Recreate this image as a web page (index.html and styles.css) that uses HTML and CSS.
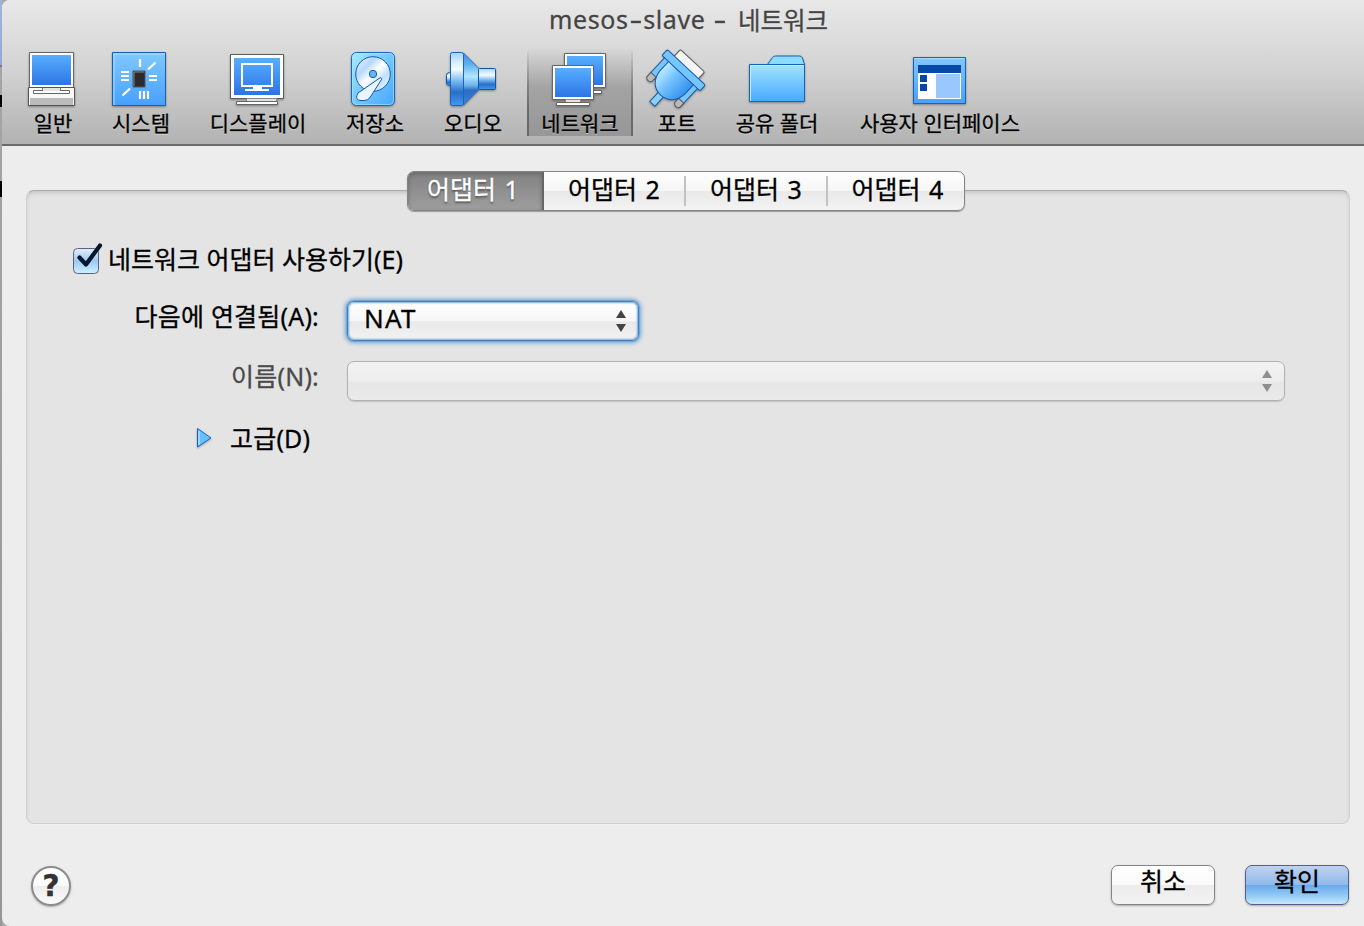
FILE: index.html
```html
<!DOCTYPE html>
<html lang="ko">
<head>
<meta charset="utf-8">
<title>mesos-slave - 네트워크</title>
<link rel="stylesheet" href="styles.css">
</head>
<body>
<svg class="defs" width="0" height="0">
  <defs>
    <linearGradient id="screen" x1="0" y1="0" x2="0" y2="1"><stop offset="0" stop-color="#57afff"/><stop offset="1" stop-color="#2d74e4"/></linearGradient>
    <linearGradient id="sky" x1="0" y1="0" x2="0" y2="1"><stop offset="0" stop-color="#80c9ff"/><stop offset="1" stop-color="#46a0ff"/></linearGradient>
    <linearGradient id="disk" x1="0" y1="0" x2="1" y2="1"><stop offset="0" stop-color="#a9eaff"/><stop offset=".5" stop-color="#71c8ff"/><stop offset="1" stop-color="#46a5fb"/></linearGradient>
    <linearGradient id="platter" x1="0" y1="0" x2="1" y2="1"><stop offset="0" stop-color="#f2f7ff"/><stop offset=".3" stop-color="#b6d8ff"/><stop offset=".5" stop-color="#fff"/><stop offset=".7" stop-color="#c1e1ff"/><stop offset="1" stop-color="#f6fbff"/></linearGradient>
    <linearGradient id="horn" x1="0" y1="0" x2="0" y2="1"><stop offset="0" stop-color="#a3d2f7"/><stop offset=".2" stop-color="#d9f1ff"/><stop offset=".32" stop-color="#f4fbff"/><stop offset=".55" stop-color="#74b5f0"/><stop offset=".75" stop-color="#286fc8"/><stop offset="1" stop-color="#4397f1"/></linearGradient>
    <linearGradient id="cone" x1="0" y1="0" x2="0" y2="1"><stop offset="0" stop-color="#3c8fe0"/><stop offset=".22" stop-color="#62b1ee"/><stop offset=".45" stop-color="#b2e5ff"/><stop offset=".62" stop-color="#6eb5ec"/><stop offset=".72" stop-color="#2b6cc4"/><stop offset="1" stop-color="#3a82dc"/></linearGradient>
    <linearGradient id="plug" x1="0" y1="0" x2="1" y2="0"><stop offset="0" stop-color="#bfeaff"/><stop offset=".4" stop-color="#77c5ff"/><stop offset="1" stop-color="#3591ee"/></linearGradient>
    <linearGradient id="folder" x1="0" y1="0" x2="0" y2="1"><stop offset="0" stop-color="#a0e5ff"/><stop offset="1" stop-color="#48a8ff"/></linearGradient>
  </defs>
</svg>
<div class="backdrop"><i class="mark mark-a"></i><i class="mark mark-b"></i></div>
<main class="window">
  <header class="toolbar">
    <h1 class="title"><span class="latin">mesos<span class="dash">-</span>slave <span class="dash">-</span></span><span class="hangul">네트워크</span></h1>
    <nav class="tools">
      <div class="tool"><svg class="icon" viewBox="21 48 64 62">
        <path d="M29.500 52.500h44v35h-44z" fill="#fff" stroke="#666"/><path d="M32 55h39v30H32z" fill="url(#screen)"/>
        <path d="M28.500 87.500h46v18h-46z" fill="#f8f8f8" stroke="#555"/><path d="M30 98h43v7H30z" fill="#bbb"/>
        <path d="M33.500 90.500h36v3h-36z" fill="#fff" stroke="#666"/><path d="M43 88h17v3H43z" fill="#e2e4e2"/><path d="M42.500 87.500v3M60.500 87.500v3" stroke="#777"/></svg><span>일반</span></div>
      <div class="tool"><svg class="icon" viewBox="109 48 64 62">
        <path d="M112.500 52.500h53v53h-53z" fill="url(#sky)" stroke="#155fb8"/><path d="M114 105V54h51" fill="none" stroke="#b3ddff"/>
        <path d="M133 71h12v16h-12z" fill="#292b2d" stroke="#57544e"/><path d="M134 86V72h10" fill="none" stroke="#8a8780"/>
        <path d="M140 59v8M148 69.500l7.500-7M121 72h8M121 76h8M121 80h8M149 76h8M149 80h8M122.500 95.500l7.500-7M140 91v8M144 91v8M148 91v8" fill="none" stroke="#fff" stroke-width="2.200"/></svg><span>시스템</span></div>
      <div class="tool"><svg class="icon" viewBox="226 48 64 62">
        <path d="M230.500 54.500h53v44h-53z" fill="#fff" stroke="#5c5c5c"/><path d="M234 58h46v37h-46z" fill="url(#screen)"/>
        <path d="M242 64h30v22h-30z" fill="none" stroke="#fff" stroke-width="2"/><path d="M253 87h9v2h7v2h-24v-2h8z" fill="#fff"/>
        <path d="M246.500 98.500h30v3h-30z" fill="#e4e4e4" stroke="#888"/><path d="M236.500 101.500h41v3h-41z" fill="#fff" stroke="#666"/></svg><span>디스플레이</span></div>
      <div class="tool"><svg class="icon" viewBox="343 48 64 62">
        <rect x="351.500" y="52.500" width="43" height="53" rx="5" fill="url(#disk)" stroke="#1768bd"/><rect x="352.500" y="53.500" width="41" height="51" rx="4" fill="none" stroke="#a8eaff" opacity=".6"/>
        <circle cx="373" cy="74" r="17.300" fill="url(#platter)" stroke="#1658ab"/><circle cx="373" cy="74" r="3.700" fill="#69b5f2" stroke="#1658ab"/>
        <path d="M379 78.500q3-2 2.500 1L370 97.500q-2 3-6 3h-4q-4.500-1-3-5 0-3 4-4.500z" fill="#eaf6ff" stroke="#1658ab"/></svg><span>저장소</span></div>
      <div class="tool"><svg class="icon" viewBox="441 48 64 62">
        <rect x="446.500" y="72.500" width="6" height="13" rx="3" fill="url(#horn)" stroke="#1254a7"/>
        <path d="M463.500 53l15.500 15.500v21L463.500 105z" fill="url(#cone)" stroke="#2a70c2"/>
        <rect x="450.500" y="52.500" width="13" height="53" rx="2" fill="url(#horn)" stroke="#1a62ba"/>
        <rect x="478.500" y="68.500" width="17" height="21" rx="1" fill="url(#horn)" stroke="#1254a7"/></svg><span>오디오</span></div>
      <div class="tool selected"><svg class="icon" viewBox="548 48 64 62">
        <path d="M593.500 90.500h8v3h-8z" fill="#fff" stroke="#666"/><path d="M564.500 53.500h41v34h-41z" fill="#fff" stroke="#666"/><path d="M567 56h36v29h-36z" fill="url(#screen)"/>
        <path d="M552.500 65.500h41v34h-41z" fill="#fff" stroke="#666"/><path d="M555 68h36v29h-36z" fill="url(#screen)"/>
        <path d="M565.500 99.500h15v3h-15z" fill="#e1e4e1" stroke="#888"/><path d="M556.500 102.500h33v3h-33z" fill="#fff" stroke="#666"/></svg><span>네트워크</span></div>
      <div class="tool"><svg class="icon" viewBox="645 48 64 62">
        <g transform="translate(683 71) rotate(43)" stroke="#1459ad">
          <rect x="-16.500" y="-14" width="33" height="12" rx="1.500" fill="#f5f5f5" stroke="#555"/>
          <path d="M-22.500 1h7v24h-7zM15.500 1h7v24h-7z" fill="#79c5fb"/>
          <path d="M-22.500 23h7v6q-3.500 4-7 0zM15.500 23h7v6q-3.500 4-7 0z" fill="#bbb" stroke="#555"/>
          <path d="M-3.500 30h7v15h-7z" fill="#8bd0fc"/>
          <path d="M-17 2h34v14q-2 16-17 17-15-1-17-17z" fill="url(#plug)"/>
          <rect x="-26" y="-5" width="52" height="8" rx="1.500" fill="#75c6ff"/>
        </g></svg><span>포트</span></div>
      <div class="tool"><svg class="icon" viewBox="745 48 64 62">
        <path d="M767.500 64.500l5-7q1-1.500 3-1.500h24q2 0 3 2l2 6.500z" fill="#8bdcff" stroke="#1763bb"/>
        <path d="M749.500 64.500h55v37h-55z" fill="url(#folder)" stroke="#1763bb"/><path d="M750.500 101V65.500h53" fill="none" stroke="#c1eeff"/></svg><span>공유 폴더</span></div>
      <div class="tool"><svg class="icon" viewBox="908 48 64 62">
        <path d="M913.500 57.500h52v46h-52z" fill="url(#sky)" stroke="#1462bb"/><path d="M914.500 58.500h50" stroke="#a9ddff"/>
        <path d="M918 73h43v26h-43z" fill="#fff"/><path d="M918 65h43v8h-43zM920 75h7v7h-7zM920 84h7v7h-7z" fill="#0648a8"/><path d="M936 74h24v24h-24z" fill="#9bc7ff"/></svg><span>사용자 인터페이스</span></div>
    </nav>
  </header>
  <section class="content">
    <div class="panel">
      <div class="tabs">
        <button class="tab active">어댑터 1</button><button class="tab second">어댑터 2</button><button class="tab third">어댑터 3</button><button class="tab fourth">어댑터 4</button>
      </div>
      <div class="enable">
        <svg class="check" viewBox="0 0 32 34"><defs><linearGradient id="box" x1="0" y1="0" x2="0" y2="1"><stop offset="0" stop-color="#e8eef8"/><stop offset=".5" stop-color="#9dc8f2"/><stop offset="1" stop-color="#cdf2ff"/></linearGradient></defs>
          <rect x="1.500" y="6.500" width="25" height="25" rx="4" fill="url(#box)" stroke="#5b6280"/><path d="M7.500 15.500l6.500 7L28 3.500" fill="none" stroke="#06182e" stroke-width="4.200" stroke-linecap="round" stroke-linejoin="round"/></svg>
        <span class="enable-text">네트워크 어댑터 사용하기(E)</span>
      </div>
      <div class="form">
        <label class="attach">다음에 연결됨(A):</label>
        <div class="select focus"><span>NAT</span><svg class="arrows" viewBox="0 0 12 24"><path d="M6 1l5 8H1zM6 23l5-8H1z"/></svg></div>
        <label class="name">이름(N):</label>
        <div class="select disabled"><span></span><svg class="arrows" viewBox="0 0 12 24"><path d="M6 1l5 8H1zM6 23l5-8H1z"/></svg></div>
      </div>
      <div class="advanced">
        <svg class="disclosure" viewBox="0 0 17 22"><path d="M1.500 1.500L15 11 1.500 20z" fill="#69c0ff" stroke="#1765bb" stroke-linejoin="round"/><path d="M3 4v14" stroke="#c5ebff"/></svg>
        <span class="adv-text">고급(D)</span>
      </div>
    </div>
  </section>
  <footer class="footer">
    <button class="help">?</button>
    <button class="btn cancel">취소</button>
    <button class="btn ok">확인</button>
  </footer>
</main>
</body>
</html>
```
FILE: styles.css
```css
* { box-sizing: border-box; }
html, body { margin: 0; }
body {
  display: flex;
  width: 1364px;
  height: 926px;
  overflow: hidden;
  background: #a8a8a8;
  font-family: "Noto Sans", "Noto Sans CJK KR", sans-serif;
  color: #000;
  -webkit-text-stroke: .3px currentColor;
}
button { margin: 0; padding: 0; font: inherit; color: inherit; white-space: nowrap; }
svg { display: block; flex: none; }
.defs { position: absolute; }
.backdrop {
  flex: none;
  width: 2px;
  height: 926px;
  background: linear-gradient(#9fb4d8, #91aad4 65px, #666 65px, #a5a5a5 68px, #969696);
}
.mark { display: block; width: 2px; background: #000; }
.mark-a { height: 12px; margin-top: 95px; }
.mark-b { height: 16px; margin-top: 74px; }
.window {
  flex: 1;
  display: flex;
  flex-direction: column;
  height: 926px;
  border-radius: 8px 0 0 8px;
  overflow: hidden;
  background: #ededed;
}
.toolbar {
  height: 146px;
  flex: none;
  border-bottom: 2px solid #6b6b6b;
  background: linear-gradient(#e8e8e8, #d2d2d2 50%, #b2b2b2);
}
.title {
  display: flex;
  align-items: center;
  margin: 0 0 0 547px;
  height: 38px;
  font-size: 25px;
  font-weight: 400;
  color: #444;
  white-space: pre;
  text-shadow: 0 1px 0 #f4f4f4;
}
.latin { letter-spacing: .6px; width: 189px; }
.dash { display: inline-block; transform: scaleX(1.6); margin: 0 3px; }
.hangul { font-size: 24.500px; }
.tools {
  display: grid;
  grid-template-columns: 80px 96px 138px 96px 100px 4px 106px 88px 112px 214px;
  margin-left: 11px;
  padding-top: 10px;
}
.tool { display: flex; flex-direction: column; align-items: center; height: 88px; font-size: 21px; text-shadow: 0 1px 0 rgba(255,255,255,.55); }
.tool span { line-height: 30px; margin-top: -2px; white-space: nowrap; }
.icon { width: 64px; height: 62px; filter: drop-shadow(0 1px 1px rgba(0,0,0,.35)); }
.selected {
  grid-column: 7;
  background:
    linear-gradient(transparent, rgba(80,80,80,.65) 70%) left / 2px 100% no-repeat,
    linear-gradient(transparent, rgba(80,80,80,.65) 70%) right / 2px 100% no-repeat,
    linear-gradient(rgba(125,125,125,0), rgba(125,125,125,.5) 45%, rgba(130,130,130,.6));
}
.content { padding: 44px 14px 0 24px; }
.panel {
  height: 634px;
  border: 1px solid #cfcfcf;
  border-top-color: #aaa;
  border-radius: 8px;
  background: #e4e4e4;
  box-shadow: inset 0 3px 4px -1px #c4c4c4, 0 1px 0 #f1f1f1;
}
.tabs {
  display: flex;
  width: 558px;
  height: 40px;
  margin: -20px auto 0 380px;
  border: 1px solid #858585;
  border-radius: 7px;
  background: linear-gradient(#fff, #f5f5f5 50%, #e9e9e9 51%, #f3f3f3);
  box-shadow: 0 1px 1px #999;
}
.tab { flex: none; height: 38px; border: 0; background: none; font-size: 25px; line-height: 34px; word-spacing: 2px; position: relative; padding-bottom: 4px; }
.second { width: 140px; }
.third { width: 142px; padding-left: 2px; }
.fourth { width: 138px; padding-left: 5px; }
.tab + .tab + .tab::before { content: ""; position: absolute; left: 0; top: 4px; width: 2px; height: 30px; background: #c2c2c2; }
.active { width: 136px; padding-right: 4px; border-right: 2px solid #666; border-radius: 6px 0 0 6px; color: #fff; background: linear-gradient(#828282, #9e9e9e); box-shadow: inset 0 2px 4px #6b6b6b; text-shadow: 0 2px 2px #555; }
.enable { display: flex; align-items: center; height: 34px; margin: 31px 0 0 45px; }
.check { width: 32px; height: 34px; }
.enable-text { margin: -2px 0 0 4px; font-size: 25px; white-space: nowrap; }
.form {
  display: grid;
  grid-template-columns: 292px 938px;
  grid-template-rows: 40px 40px;
  row-gap: 20px;
  column-gap: 28px;
  margin-top: 25px;
}
.form label { text-align: right; font-size: 25px; line-height: 30px; letter-spacing: .2px; white-space: nowrap; }
.form .name { color: #4a4a4a; }
.select {
  display: flex;
  align-items: center;
  justify-content: space-between;
  height: 40px;
  padding: 0 11px 0 16px;
  border: 1px solid #b2b2b2;
  border-radius: 7px;
  font-size: 26px;
  letter-spacing: 1.200px;
}
.select span { margin-top: -6px; }
.focus { width: 292px; border-color: #4680b5; background: linear-gradient(#fff, #f6f6f6 50%, #e9e9e9 52%, #f2f2f2); box-shadow: 0 0 0 1px #70a6d8, 0 0 4px 2px #70a6d8, inset 0 0 2px 1px #75a9d8; }
.disabled { background: linear-gradient(#f2f2f2, #ededed 50%, #e6e6e6 55%, #eaeaea); box-shadow: 0 1px 1px #c2c2c2; }
.arrows { width: 12px; height: 24px; fill: #444; }
.disabled .arrows { fill: #8e8e8e; }
.advanced { display: flex; align-items: center; height: 40px; margin: 17px 0 0 169px; font-size: 25px; }
.disclosure { width: 17px; height: 22px; filter: drop-shadow(0 1px 1px rgba(0,0,0,.3)); }
.adv-text { margin: -3px 0 0 17px; letter-spacing: .2px; }
.footer { display: flex; align-items: center; height: 42px; margin: 40px 15px 0 29px; }
.help { width: 40px; height: 40px; margin-top: 1px; border: 2px solid #8c8c8c; border-radius: 50%; background: linear-gradient(#fff, #fafafa 50%, #ededed 51%, #fafafa); box-shadow: 0 1px 2px #aaa; font-family: "DejaVu Sans", sans-serif; font-weight: 700; font-size: 30px; line-height: 36px; color: #333; }
.btn { width: 104px; height: 40px; padding-bottom: 7px; border: 1px solid #858585; border-radius: 7px; font-size: 25px; line-height: 31px; box-shadow: 0 1px 2px #aaa; }
.cancel { margin-left: auto; background: linear-gradient(#fff, #f9f9f9 50%, #ececec 51%, #f3f3f3); }
.ok { margin-left: 30px; border-color: #58608a; background: linear-gradient(#c0d2ee, #8fb9ec 50%, #6ba9ea 51%, #8ec6f5 75%, #c2eafa); }
```
